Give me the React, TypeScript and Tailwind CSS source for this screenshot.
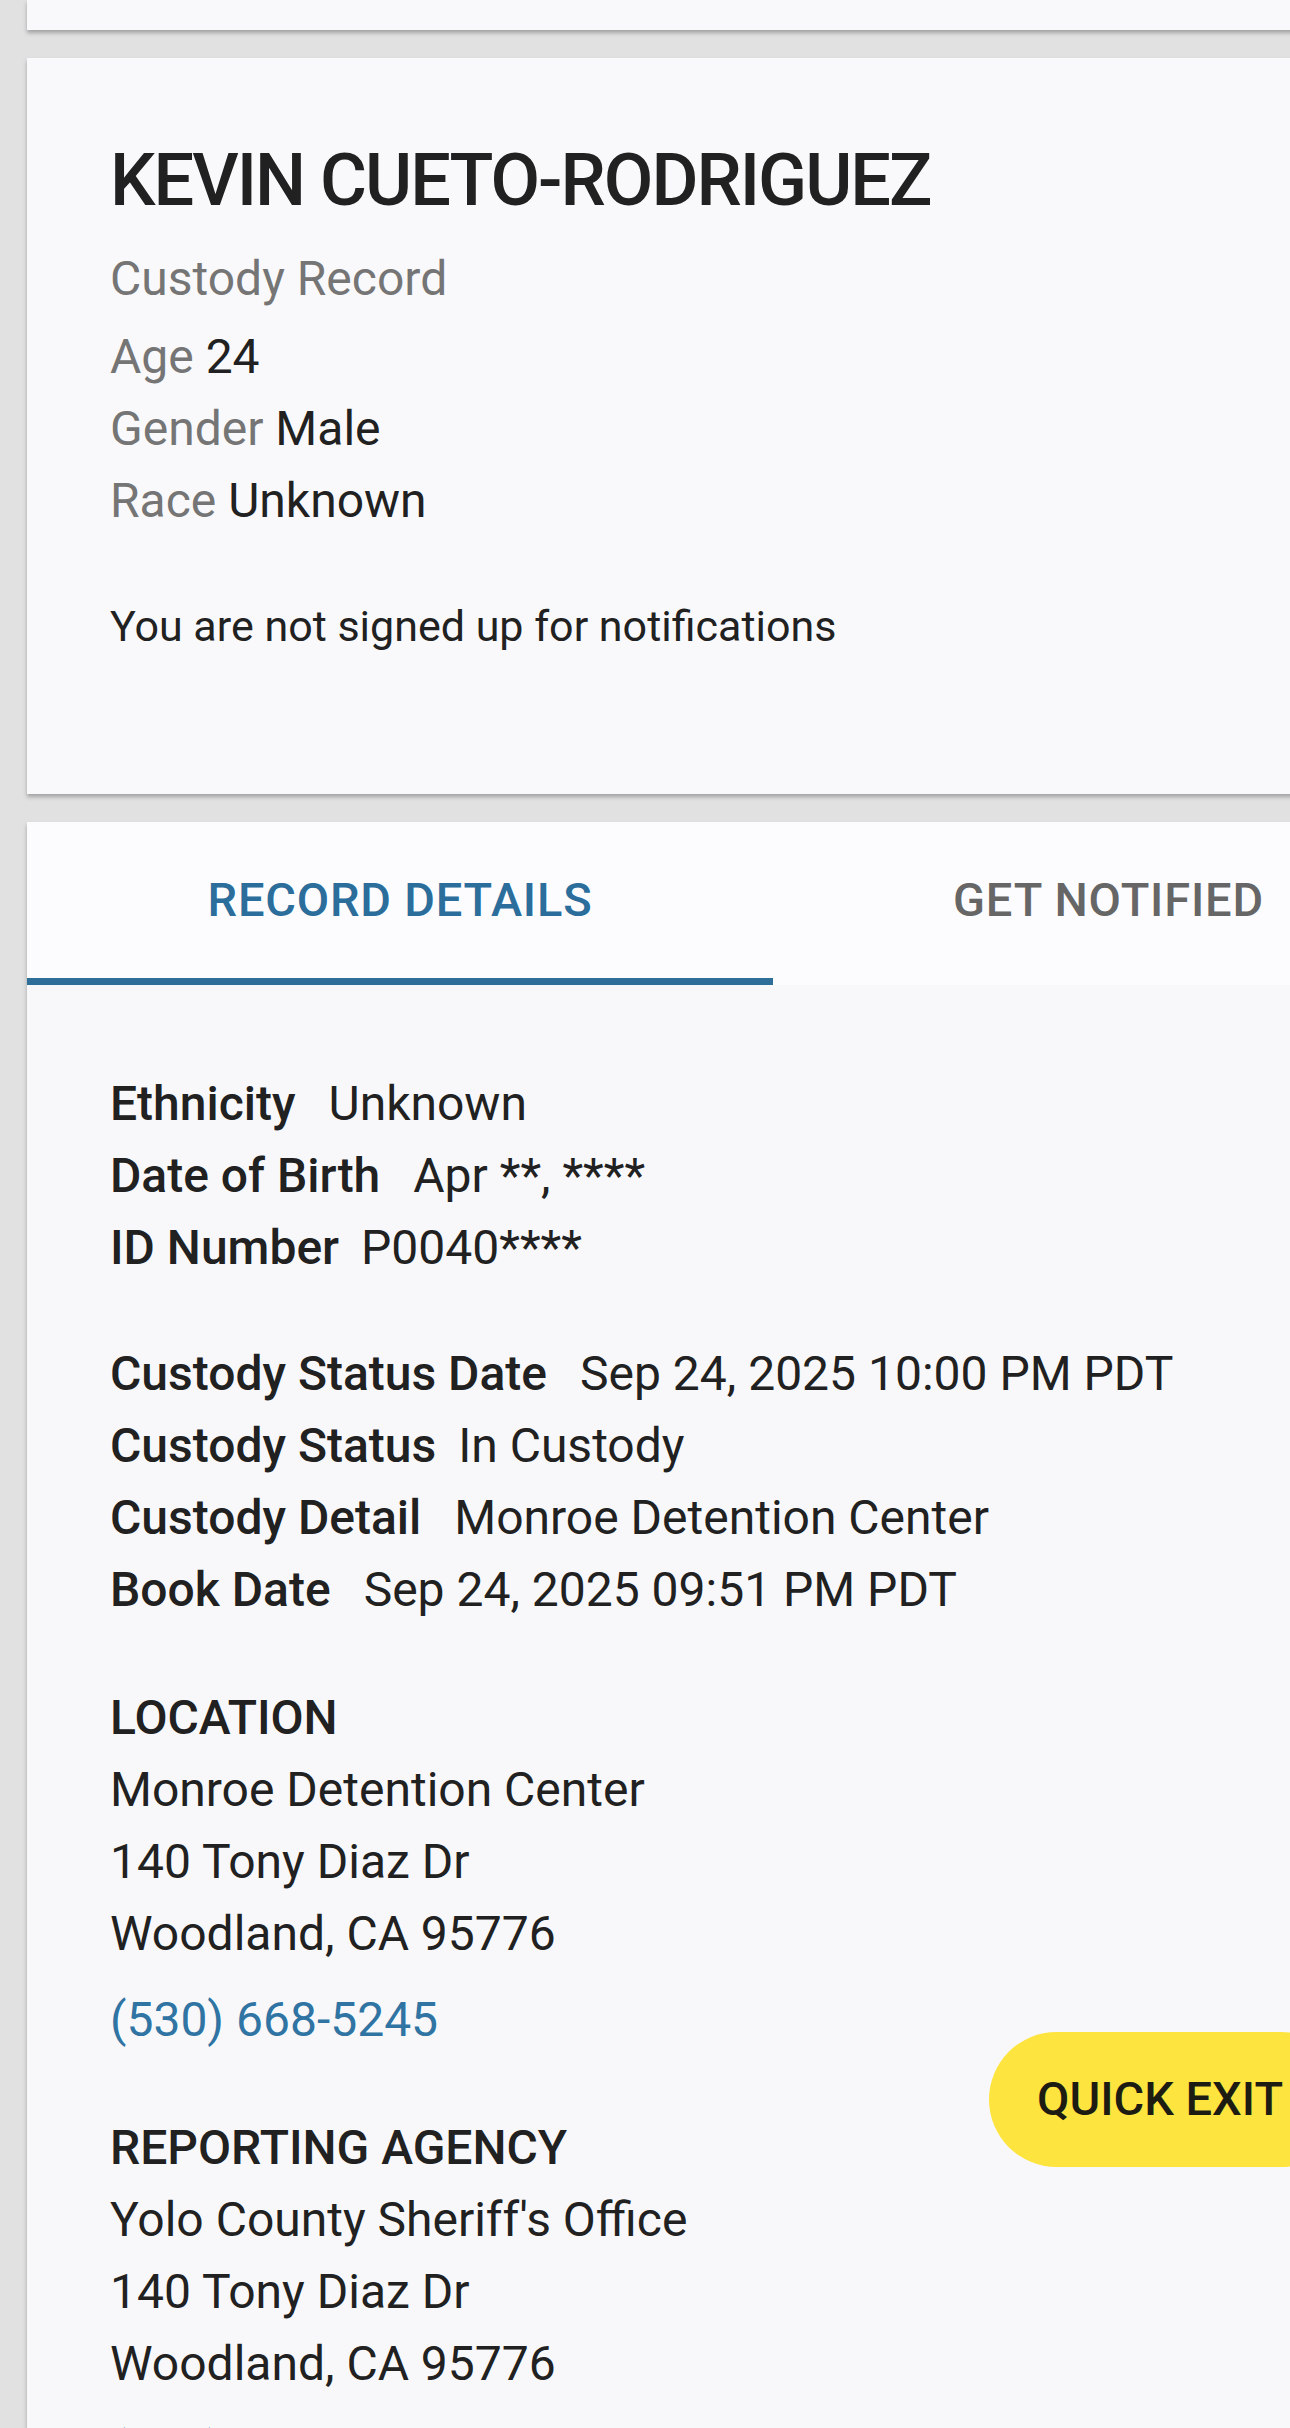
import React from "react";

type Row = { label: string; value: string; gap?: string };

const identity: Row[] = [
  { label: "Ethnicity", value: "Unknown" },
  { label: "Date of Birth", value: "Apr **, ****" },
  { label: "ID Number", value: "P0040****", gap: "gap-[22px]" },
];

const custody: Row[] = [
  { label: "Custody Status Date", value: "Sep 24, 2025 10:00 PM PDT" },
  { label: "Custody Status", value: "In Custody", gap: "gap-[22px]" },
  { label: "Custody Detail", value: "Monroe Detention Center" },
  { label: "Book Date", value: "Sep 24, 2025 09:51 PM PDT" },
];

function DetailRows({ rows }: { rows: Row[] }) {
  return (
    <div className="flex flex-col">
      {rows.map((row) => (
        <div key={row.label} className={`flex ${row.gap ?? "gap-[33px]"}`}>
          <span className="font-medium">{row.label}</span>
          <span>{row.value}</span>
        </div>
      ))}
    </div>
  );
}

function Address({ title, name }: { title: string; name: string }) {
  return (
    <div className="flex flex-col">
      <span className="font-medium uppercase">{title}</span>
      <span>{name}</span>
      <span>140 Tony Diaz Dr</span>
      <span>Woodland, CA 95776</span>
      <a className="mt-[14px] text-[#2f74a3]">(530) 668-5245</a>
    </div>
  );
}

export default function App() {
  return (
    <div className="relative min-h-screen overflow-hidden bg-[#e1e1e1] font-['Roboto',sans-serif] text-[#212121]">
      {/* previous card, mostly scrolled away */}
      <div className="ml-[27px] h-[30px] w-[1300px] bg-[#f9f9fb] shadow-[0_3px_4px_rgba(0,0,0,0.28)]" />

      <div className="ml-[27px] mt-[28px] w-[1300px] bg-[#f9f9fb] pb-[136px] pl-[83px] pt-[75px] shadow-[0_3px_4px_rgba(0,0,0,0.28)]">
        <h1 className="text-[72px] font-medium leading-[96px] tracking-[-2px]">KEVIN CUETO-RODRIGUEZ</h1>
        <p className="mt-[14px] text-[48px] leading-[72px] text-[#757575]">Custody Record</p>
        <div className="mt-[6px] flex flex-col text-[48px] leading-[72px]">
          <span>
            <span className="text-[#757575]">Age</span> 24
          </span>
          <span>
            <span className="text-[#757575]">Gender</span> Male
          </span>
          <span>
            <span className="text-[#757575]">Race</span> Unknown
          </span>
        </div>
        <p className="mt-[58px] text-[43px] leading-[63px]">You are not signed up for notifications</p>
      </div>

      <div className="ml-[27px] mt-[28px] w-[1300px] bg-[#f8f8fa] pb-[200px] shadow-[0_3px_4px_rgba(0,0,0,0.28)]">
        <div className="flex h-[163px] bg-[#fcfcfe] text-[47px] font-medium uppercase tracking-[0.8px]">
          <div className="flex w-[746px] items-center justify-center border-b-[7px] border-[#2f6e98] text-[#2b6d9b]">
            Record Details
          </div>
          <div className="flex items-center pb-[7px] pl-[180px] text-[#666666]">Get Notified</div>
        </div>

        <div className="flex flex-col pl-[83px] pt-[83px] text-[48px] leading-[72px]">
          <DetailRows rows={identity} />
          <div className="mt-[54px]">
            <DetailRows rows={custody} />
          </div>
          <div className="mt-[56px]">
            <Address title="Location" name="Monroe Detention Center" />
          </div>
          <div className="mt-[56px]">
            <Address title="Reporting Agency" name="Yolo County Sheriff's Office" />
          </div>
        </div>
      </div>

      <button className="absolute left-[989px] top-[2032px] flex h-[135px] w-[360px] items-center rounded-full bg-[#fee43f] pl-[48px] text-[47px] font-medium text-[#1d1c12]">
        QUICK EXIT
      </button>
    </div>
  );
}
